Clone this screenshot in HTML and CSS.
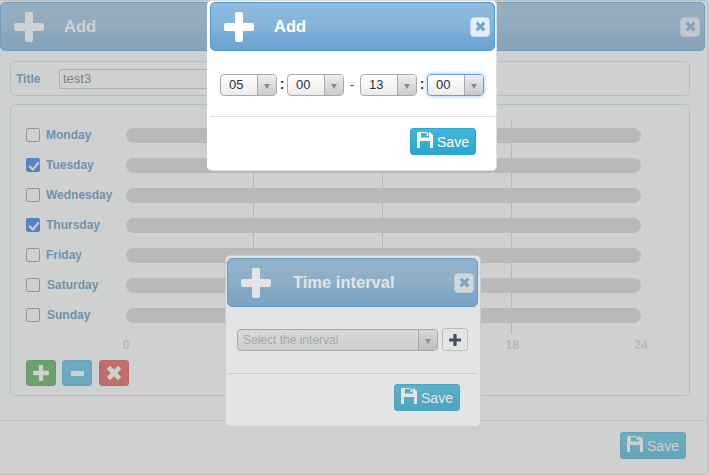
FILE: index.html
```html
<!DOCTYPE html>
<html lang="en">
<head>
    <meta charset="UTF-8">
    <title>Add</title>
    <link rel="stylesheet" href="styles.css">
</head>
<body>

<svg class="icon-defs" width="0" height="0">
    <symbol id="i-plus" viewBox="0 0 30 30"><path d="M11 2q0-2 2-2h4q2 0 2 2v9h9q2 0 2 2v4q0 2-2 2h-9v9q0 2-2 2h-4q-2 0-2-2v-9H2q-2 0-2-2v-4q0-2 2-2h9z"/></symbol>
    <symbol id="i-close" viewBox="0 0 12 12"><path d="M3 .6 6 3.6 9 .6 11.400 3 8.400 6 11.400 9 9 11.400 6 8.400 3 11.400.6 9 3.600 6 .6 3z"/></symbol>
    <symbol id="i-save" viewBox="0 0 16 16"><path fill-rule="evenodd" d="M0 1q0-1 1-1h11.500L16 3v12q0 1-1 1H1q-1 0-1-1zM4 0v5.500h8V0H9.500v4h2V1H4zM3 9v7h10V9z"/></symbol>
</svg>

<div class="window window-main">
    <div class="dialog-head">
        <svg class="head-plus"><use href="#i-plus"/></svg>
        <h2>Add</h2>
        <button class="close"><svg><use href="#i-close"/></svg></button>
    </div>
    <div class="main-body">
        <div class="panel title-panel">
            <label>Title</label>
            <div class="text-input">test3</div>
        </div>
        <div class="panel week-panel">
            <div class="week">
                <div class="grid-lines"><i></i><i></i><i></i></div>
                <div class="day"><span class="check"></span><b>Monday</b><span class="bar"></span></div>
                <div class="day"><span class="check on"></span><b>Tuesday</b><span class="bar"></span></div>
                <div class="day"><span class="check"></span><b>Wednesday</b><span class="bar"></span></div>
                <div class="day"><span class="check on"></span><b>Thursday</b><span class="bar"></span></div>
                <div class="day"><span class="check"></span><b>Friday</b><span class="bar"></span></div>
                <div class="day late"><span class="check"></span><b>Saturday</b><span class="bar"></span></div>
                <div class="day late"><span class="check"></span><b>Sunday</b><span class="bar"></span></div>
                <div class="hours"><span>0</span><span></span><span></span><span>18</span><span>24</span></div>
            </div>
            <div class="tools">
                <button class="tool green"><svg><use href="#i-plus"/></svg></button>
                <button class="tool blue"><span class="minus"></span></button>
                <button class="tool red"><svg><use href="#i-close"/></svg></button>
            </div>
        </div>
    </div>
    <div class="dialog-foot">
        <button class="save"><svg><use href="#i-save"/></svg>Save</button>
    </div>
</div>

<div class="dim"></div>

<div class="window window-interval">
    <div class="dialog-head">
        <svg class="head-plus"><use href="#i-plus"/></svg>
        <h2>Time interval</h2>
        <button class="close"><svg><use href="#i-close"/></svg></button>
    </div>
    <div class="interval-body">
        <div class="select wide"><span class="value">Select the interval</span><span class="arrow"></span></div>
        <button class="add-btn"><svg><use href="#i-plus"/></svg></button>
    </div>
    <div class="dialog-foot">
        <button class="save"><svg><use href="#i-save"/></svg>Save</button>
    </div>
</div>

<div class="dim"></div>

<div class="window window-add">
    <div class="dialog-head">
        <svg class="head-plus"><use href="#i-plus"/></svg>
        <h2>Add</h2>
        <button class="close"><svg><use href="#i-close"/></svg></button>
    </div>
    <div class="time-body">
        <div class="select"><span class="value">05</span><span class="arrow"></span></div>
        <b class="colon">:</b>
        <div class="select"><span class="value">00</span><span class="arrow"></span></div>
        <span class="dash">-</span>
        <div class="select"><span class="value">13</span><span class="arrow"></span></div>
        <b class="colon">:</b>
        <div class="select focus"><span class="value">00</span><span class="arrow"></span></div>
    </div>
    <div class="dialog-foot">
        <button class="save"><svg><use href="#i-save"/></svg>Save</button>
    </div>
</div>

</body>
</html>
```

FILE: styles.css
```css
body {
    margin: 0;
    width: 709px;
    height: 475px;
    overflow: hidden;
    position: relative;
    font-family: "Liberation Sans", Arial, sans-serif;
    font-size: 12px;
    background-color: #fff;
}
button {
    padding: 0;
    font-family: inherit;
}
.icon-defs {
    position: absolute;
}
.dim {
    position: absolute;
    inset: 0;
    background-color: rgba(160, 162, 162, 0.295);
}

/* windows */
.window {
    position: absolute;
    box-sizing: border-box;
    background-color: #fff;
    border-radius: 5px;
    border: 1px solid #ddd;
    padding: 1px 2px;
}
.window-main {
    left: -3px;
    top: 0;
    width: 711px;
    height: 475px;
}
.window-add {
    left: 207px;
    top: 0;
    width: 290px;
    height: 171px;
    border-left-color: #fff;
    padding-right: 1px;
}
.window-interval {
    left: 225px;
    top: 255px;
    width: 256px;
    height: 172px;
    padding: 2px 2px 2px 1px;
}
.dialog-head {
    height: 49px;
    box-sizing: border-box;
    display: flex;
    align-items: center;
    border: 1px solid #4d9ad6;
    border-radius: 5px;
    background: linear-gradient(#8dbade 0, #84b3d9 25px, #76aad5 33px, #6aa3d1 100%);
    color: #fff;
}
.head-plus {
    width: 30px;
    height: 30px;
    margin-left: 13px;
    fill: #fff;
    flex: none;
}
.dialog-head h2 {
    margin: -2px 0 0 20px;
    flex: 1;
    font-size: 16.500px;
    font-weight: bold;
    line-height: 20px;
}
.window-interval .dialog-head h2 {
    margin-left: 22px;
}
.close {
    width: 20px;
    height: 20px;
    margin-right: 4px;
    border: 1px solid #c4daec;
    border-radius: 4px;
    background-color: #e4eef7;
    display: flex;
    align-items: center;
    justify-content: center;
}
.window-interval .close {
    margin-right: 3px;
}
.close svg {
    width: 11px;
    height: 11px;
    fill: #6fa5d3;
}
.dialog-foot {
    border-top: 1px solid #ddd;
    display: flex;
    justify-content: flex-end;
    padding: 11px 19px 0 0;
}
.window-interval .dialog-foot {
    padding: 10px 18px 0 0;
}
.save {
    width: 66px;
    height: 27px;
    box-sizing: border-box;
    border: 1px solid #2aa5cb;
    border-radius: 3px;
    background: linear-gradient(#43b6d9, #2aa6cc);
    color: #fff;
    font-size: 14px;
    display: flex;
    align-items: center;
    justify-content: center;
    gap: 4px;
}
.save svg {
    width: 16px;
    height: 16px;
    fill: #fff;
    margin-top: -4px;
}

/* main window */
.main-body {
    padding: 10px 15px 24px 10px;
}
.panel {
    border: 1px solid #c5d9ea;
    border-radius: 5px;
}
.title-panel {
    height: 35px;
    box-sizing: border-box;
    display: flex;
    align-items: center;
    padding-left: 5px;
}
.title-panel label {
    width: 43px;
    color: #3f81b8;
    font-weight: bold;
}
.text-input {
    width: 300px;
    height: 20px;
    line-height: 18px;
    box-sizing: border-box;
    border: 1px solid #bbb;
    border-radius: 3px;
    padding-left: 3px;
    color: #5c5c5c;
    font-size: 13px;
}
.week-panel {
    margin-top: 8px;
    height: 292px;
    box-sizing: border-box;
    padding: 15px 15px 0;
}
.week {
    position: relative;
    height: 240px;
}
.grid-lines {
    position: absolute;
    left: 227px;
    top: 0;
    width: 259px;
    height: 214px;
    display: flex;
    justify-content: space-between;
}
.grid-lines i {
    width: 1px;
    background-color: #ccc;
}
.day {
    position: relative;
    height: 30px;
    display: flex;
    align-items: center;
    color: #3f81b8;
}
.day b {
    width: 80px;
    margin-left: 6px;
}
.day.late b {
    width: 79px;
    margin-left: 7px;
}
.check {
    width: 14px;
    height: 14px;
    box-sizing: border-box;
    border: 1px solid #8a8a8a;
    border-radius: 2px;
    background-color: #fff;
    flex: none;
}
.check.on {
    border-color: #0a66e6;
    background-color: #0a66e6;
    position: relative;
}
.check.on::after {
    content: "";
    position: absolute;
    left: 3.500px;
    top: 0.500px;
    width: 4px;
    height: 8px;
    border: solid #fff;
    border-width: 0 2px 2px 0;
    transform: rotate(40deg);
}
.bar {
    width: 515px;
    height: 15px;
    border-radius: 8px;
    background-color: #d1d1d1;
}
.hours {
    position: absolute;
    left: 100px;
    top: 218px;
    width: 515px;
    display: flex;
    justify-content: space-between;
    color: #d0d0d0;
    font-weight: bold;
}
.hours span {
    width: 0;
    display: flex;
    justify-content: center;
}
.tools {
    display: flex;
    gap: 6px;
}
.tool {
    width: 30px;
    height: 26px;
    border-radius: 3px;
    display: flex;
    align-items: center;
    justify-content: center;
}
.tool svg {
    width: 16px;
    height: 16px;
    fill: #fff;
}
.green {
    background-color: #37a037;
    border: 1px solid #309430;
}
.blue {
    background-color: #36b0dc;
    border: 1px solid #2aa5cb;
}
.red {
    margin-left: 1px;
    background-color: #e03a3a;
    border: 1px solid #d43333;
}
.minus {
    width: 13px;
    height: 5px;
    border-radius: 1px;
    background-color: #fff;
}

/* selects */
.select {
    width: 57px;
    height: 22px;
    box-sizing: border-box;
    display: flex;
    border: 1px solid #aaa;
    border-radius: 4px;
    background: linear-gradient(#fff, #ececec);
    color: #333;
    font-size: 13px;
}
.select .value {
    flex: 1;
    line-height: 20px;
    padding-left: 8px;
}
.select .arrow {
    width: 18px;
    border-left: 1px solid #aaa;
    border-radius: 0 3px 3px 0;
    background: linear-gradient(#eee, #c9c9c9);
    position: relative;
}
.select .arrow::after {
    content: "";
    position: absolute;
    left: 6px;
    top: 9px;
    border: 3px solid transparent;
    border-top: 5px solid #888;
    border-bottom: 0;
}
.select.focus {
    border-color: #5b9dea;
    box-shadow: 0 0 4px #9cc3f0;
}
.time-body {
    height: 65px;
    box-sizing: border-box;
    padding: 23px 0 0 10px;
    display: flex;
    color: #333;
}
.colon {
    width: 10px;
    text-align: center;
    line-height: 20px;
    font-size: 14px;
}
.dash {
    width: 16px;
    text-align: center;
    line-height: 22px;
}
.interval-body {
    height: 66px;
    box-sizing: border-box;
    padding: 22px 0 0 10px;
    display: flex;
    gap: 4px;
}
.select.wide {
    width: 201px;
    background: linear-gradient(#f0f0f0, #e0e0e0);
    color: #aaa;
    font-size: 12px;
}
.select.wide .value {
    padding-left: 5px;
}
.add-btn {
    width: 26px;
    height: 23px;
    margin-top: -1px;
    border: 1px solid #ccc;
    border-radius: 3px;
    background-color: #fff;
    display: flex;
    align-items: center;
    justify-content: center;
}
.add-btn svg {
    width: 12px;
    height: 12px;
    fill: #1f2d40;
}
```
